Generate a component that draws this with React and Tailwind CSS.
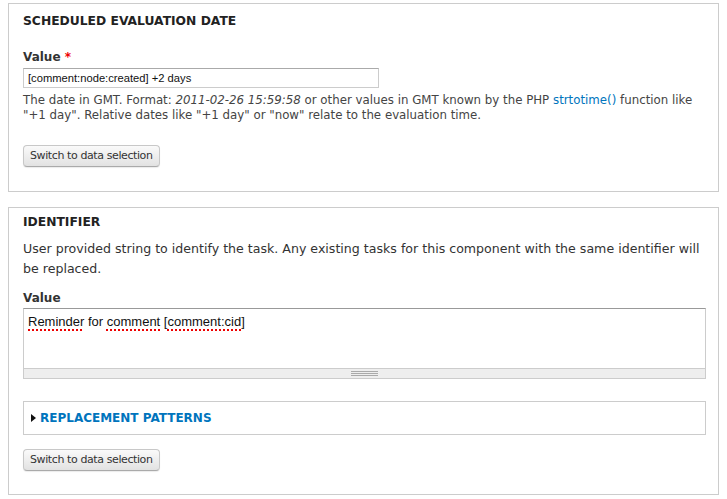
import React from "react";

const Button = ({ children }) => (
    <button className="h-[22px] px-[6px] rounded-[4px] border border-[#c8c8c8] border-b-[#aaa] bg-gradient-to-b from-[#fafafa] to-[#e2e2e2] text-[11px] tracking-[-0.4px] leading-[16px] text-[#333] shadow-[0_1px_1px_rgba(0,0,0,0.08)]">
        {children}
    </button>
);

const Legend = ({ children }) => (
    <h2 className="text-[12.3px] leading-[16px] font-bold uppercase text-[#222]">
        {children}
    </h2>
);

const Spell = ({ children }) => (
    <span className="underline decoration-dotted decoration-[#e00] decoration-2 underline-offset-[3px]">
        {children}
    </span>
);

export default function App() {
    return (
        <div
            className="min-h-screen bg-white pt-[3px] px-[8px] text-[#333]"
            style={{ fontFamily: '"DejaVu Sans", "Liberation Sans", sans-serif' }}
        >
            <section className="border border-[#ccc] pl-[14px] pr-[12px] pt-[9px] pb-[24px]">
                <Legend>Scheduled evaluation date</Legend>
                <label className="block mt-[20px] text-[12px] leading-[16px] font-bold">
                    Value <span className="text-[#e00]">*</span>
                </label>
                <div className="mt-[3px] w-[356px] h-[20px] border border-[#ccc] border-t-[#aaa] px-[4px] flex items-center text-[11.2px] text-[#111] font-['Liberation_Sans',sans-serif]">
                    [comment:node:created] +2 days
                </div>
                <p className="mt-[5px] text-[11.8px] leading-[15px] text-[#444]">
                    The date in GMT. Format: <em>2011-02-26 15:59:58</em> or other values in GMT known by the PHP{" "}
                    <a className="text-[#0074bd]">strtotime()</a> function like "+1 day". Relative dates like "+1 day" or "now" relate to the evaluation time.
                </p>
                <div className="mt-[22px] flex">
                    <Button>Switch to data selection</Button>
                </div>
            </section>

            <section className="mt-[15px] border border-[#ccc] pl-[14px] pr-[12px] pt-[6px] pb-[23px]">
                <Legend>Identifier</Legend>
                <p className="mt-[9px] text-[12.6px] leading-[20px]">
                    User provided string to identify the task. Any existing tasks for this component with the same identifier will be replaced.
                </p>
                <label className="block mt-[11px] text-[12px] leading-[16px] font-bold">Value</label>
                <div className="mt-[2px]">
                    <div className="h-[60px] border border-[#ccc] border-t-[#999] border-b-0 px-[4px] pt-[5px] text-[13px] leading-[16px] text-[#111] font-['Liberation_Sans',sans-serif]">
                        <Spell>Reminder</Spell> for <Spell>comment</Spell> [<Spell>comment:cid</Spell>]
                    </div>
                    <div className="h-[11px] border border-[#ccc] bg-[#eee] flex items-center justify-center">
                        <div className="w-[27px] flex flex-col gap-[1px]">
                            <div className="h-px bg-[#aaa]" />
                            <div className="h-px bg-[#aaa]" />
                            <div className="h-px bg-[#aaa]" />
                        </div>
                    </div>
                </div>
                <div className="mt-[22px] h-[34px] border border-[#ccc] flex items-center pl-[7px]">
                    <svg width="5" height="8" viewBox="0 0 5 8" className="mr-[4px]">
                        <path d="M0 0 L5 4 L0 8 Z" fill="#111" />
                    </svg>
                    <span className="text-[12px] font-bold uppercase text-[#0074bd]">Replacement patterns</span>
                </div>
                <div className="mt-[14px] flex">
                    <Button>Switch to data selection</Button>
                </div>
            </section>
        </div>
    );
}
